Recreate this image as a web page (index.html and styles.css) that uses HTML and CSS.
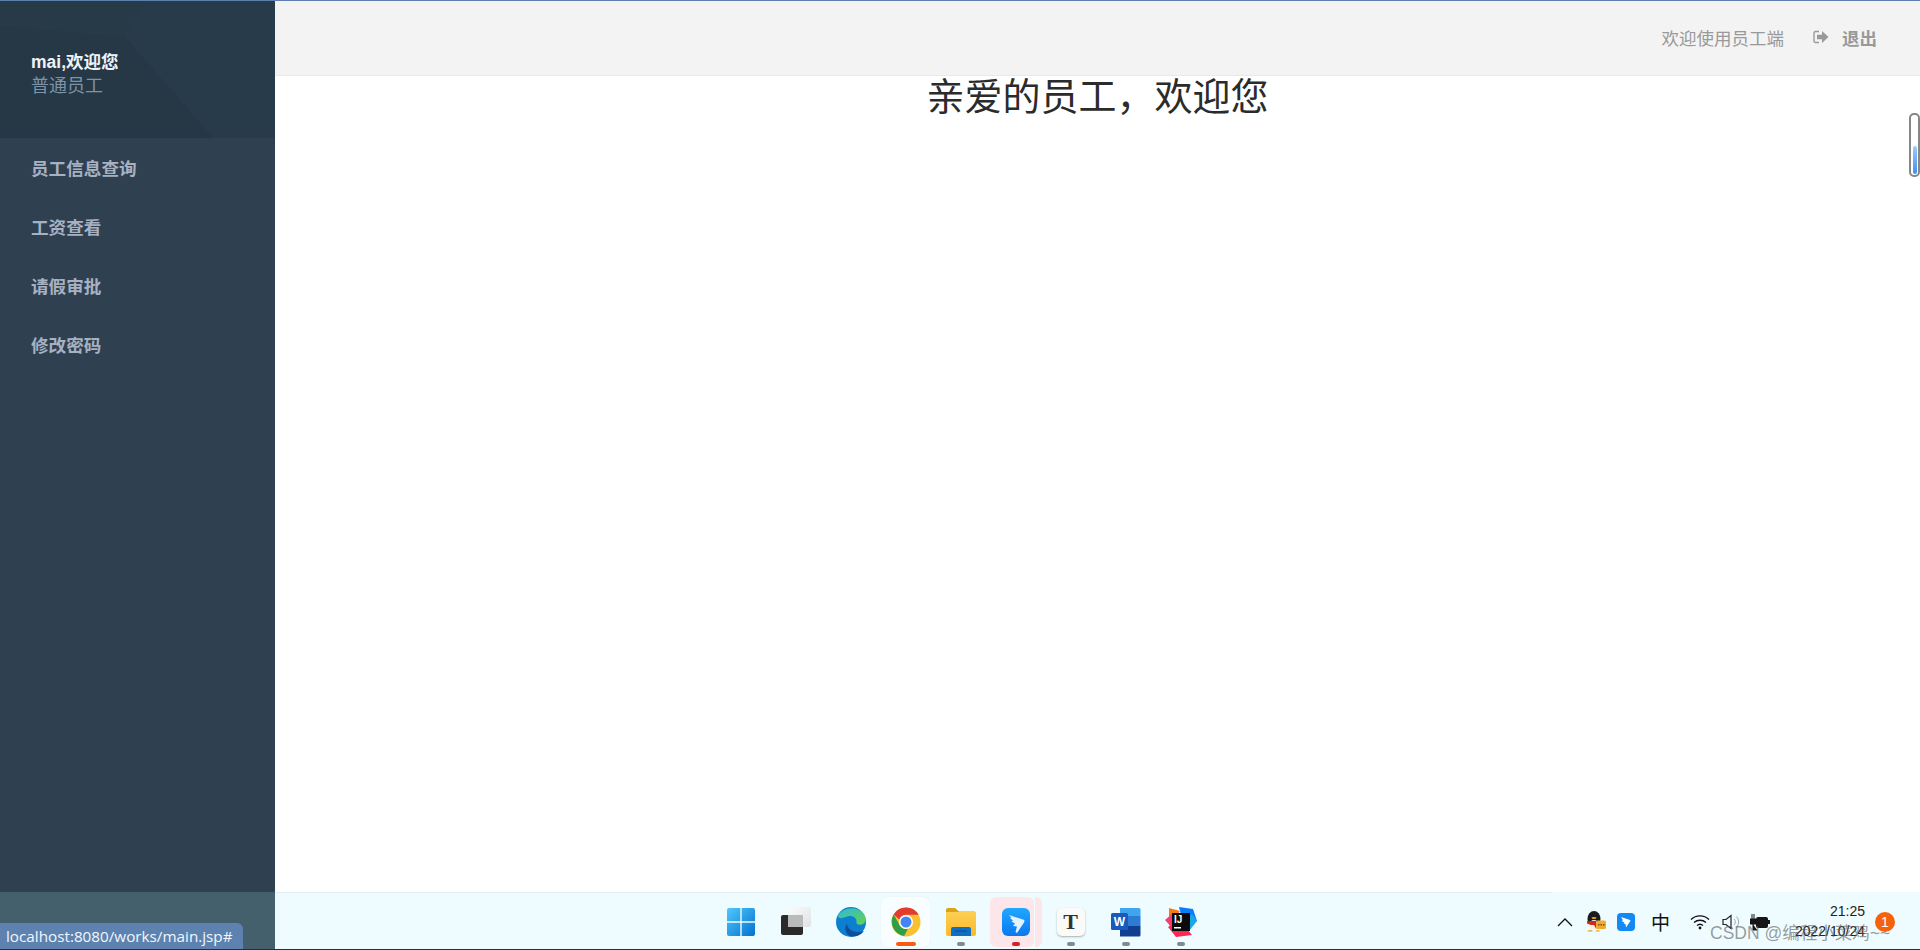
FILE: index.html
```html
<!DOCTYPE html>
<html lang="zh-CN">
<head>
<meta charset="utf-8">
<title>员工端</title>
<link rel="stylesheet" href="styles.css">
</head>
<body>
<div class="app">
  <div class="workspace">
    <aside class="sidebar">
      <div class="profile">
        <strong class="profile-name">mai,欢迎您</strong>
        <span class="profile-role">普通员工</span>
      </div>
      <nav class="nav">
        <a class="nav-item">员工信息查询</a>
        <a class="nav-item">工资查看</a>
        <a class="nav-item">请假审批</a>
        <a class="nav-item">修改密码</a>
      </nav>
    </aside>
    <main class="main">
      <header class="topbar">
        <span class="welcome">欢迎使用员工端</span>
        <a class="logout">
          <svg class="logout-icon" viewBox="0 0 16 14" width="16" height="14"><path d="M6 1.500H2.500A1.500 1.500 0 0 0 1 3v8a1.500 1.500 0 0 0 1.500 1.500H6" fill="none" stroke="#999" stroke-width="1.400"/><path d="M4 4.800h5V1l6.500 6L9 13V9.200H4z" fill="#999"/></svg>
          <b>退出</b>
        </a>
      </header>
      <h1 class="title">亲爱的员工，欢迎您</h1>
    </main>
  </div>
  <footer class="taskbar">
    <div class="taskbar-side"></div>
    <div class="taskbar-apps">
      <span class="app-icon"><svg viewBox="0 0 30 30" width="30" height="30"><defs><linearGradient id="w" x1="0" y1="0" x2="1" y2="1"><stop offset="0" stop-color="#4fc8fb"/><stop offset="1" stop-color="#0472cf"/></linearGradient></defs><path fill="url(#w)" d="M1 3a2 2 0 0 1 2-2h11.300v13.300H1zM15.700 1H27a2 2 0 0 1 2 2v11.300H15.700zM1 15.700h13.300V29H3a2 2 0 0 1-2-2zM15.700 15.700H29V27a2 2 0 0 1-2 2H15.700z"/></svg></span>
      <span class="app-icon"><svg viewBox="0 0 30 30" width="30" height="30"><defs><linearGradient id="tv" x1="0" y1="0" x2="1" y2="1"><stop offset="0" stop-color="#fbfbfb"/><stop offset="1" stop-color="#dfe3e3"/></linearGradient></defs><rect x="7" y="0" width="23" height="20" rx="2" fill="url(#tv)"/><rect x="0" y="8" width="22" height="20" rx="2" fill="#2a2a2a"/><rect x="7" y="8" width="15" height="12" fill="#b9bbbb"/></svg></span>
      <span class="app-icon"><svg viewBox="0 0 30 30" width="30" height="30"><defs><linearGradient id="e" x1="0" y1="0" x2="1" y2="1"><stop offset="0" stop-color="#2fb8d8"/><stop offset="1" stop-color="#62d44f"/></linearGradient></defs><circle cx="15" cy="15" r="15" fill="#0d7fd0"/><path d="M1.500 9C5 2 19-3 27 6c4 4.500 3.500 10-1 11.500-4 1-6-.5-5.500-2.500 .5-4-4-7-9-5.500C7 10.500 4 13 1.500 9z" fill="url(#e)"/><path d="M11 17c1 6 8 10 17 7-3 4-8 6-12.500 5.500C9 28 8 20 11 17z" fill="#0e4f9c"/></svg></span>
      <span class="app-icon app-chrome"><svg viewBox="0 0 30 30" width="30" height="30"><circle cx="15" cy="15" r="14.500" fill="#fbc02d"/><path d="M15 .5a14.500 14.500 0 0 1 12.600 7.300H15a7.200 7.200 0 0 0-6.700 4.600L2.600 7.400A14.500 14.500 0 0 1 15 .5z" fill="#e33b2e"/><path d="M2.600 7.400l6.200 10.800a7.200 7.200 0 0 0 8.300 3.400l-4 7.300A14.500 14.500 0 0 1 2.600 7.400z" fill="#2f9e48"/><circle cx="15" cy="15" r="7" fill="#fff"/><circle cx="15" cy="15" r="5.500" fill="#4285f4"/></svg><i class="pip pip-orange"></i></span>
      <span class="app-icon"><svg viewBox="0 0 30 28" width="30" height="28"><defs><linearGradient id="f" x1="0" y1="0" x2="0" y2="1"><stop offset="0" stop-color="#fbcf52"/><stop offset="1" stop-color="#fcb92c"/></linearGradient></defs><path d="M0 2a2 2 0 0 1 2-2h7l4 3.500h15a2 2 0 0 1 2 2V8H0z" fill="#dfa114"/><path d="M0 4h30v22a2 2 0 0 1-2 2H2a2 2 0 0 1-2-2z" fill="url(#f)"/><path d="M5 21a2 2 0 0 1 2-2h16a2 2 0 0 1 2 2v7H5z" fill="#0f6fc4"/><rect x="9" y="22.500" width="12" height="1" fill="#0a4f93"/></svg><i class="pip"></i></span>
      <span class="app-icon app-active"><svg class="app-glyph" viewBox="0 0 28 28" width="28" height="28"><defs><linearGradient id="d" x1="0" y1="0" x2="0" y2="1"><stop offset="0" stop-color="#20a8ff"/><stop offset="1" stop-color="#0a78f0"/></linearGradient></defs><rect width="28" height="28" rx="6" fill="url(#d)"/><path d="M7 7l14 4.500c2 .5 1.500 2 1 3L15 25l-1.500-1 1.500-5.500-4-.5 2-2.500-3.500-2 1.500-1-3-2.500 1.500-.2z" fill="#e4f2ff"/></svg><i class="pip pip-red"></i></span>
      <span class="app-icon"><span class="typora">T</span><i class="pip"></i></span>
      <span class="app-icon"><svg viewBox="0 0 30 30" width="30" height="30"><path d="M9 1h19a1.500 1.500 0 0 1 1.500 1.500V9H9z" fill="#41a5ee"/><path d="M9 9h20.500v10H9z" fill="#2b7cd3"/><path d="M9 19h20.500v9a1.500 1.500 0 0 1-1.500 1.500H9z" fill="#103f91"/><rect x="0" y="6" width="17" height="17" rx="1.500" fill="#185abd"/><text class="word-w" x="8.500" y="19">W</text></svg><i class="pip"></i></span>
      <span class="app-icon"><svg viewBox="0 0 32 30" width="32" height="30"><path d="M4 1l11 3L4 19z" fill="#f97a12"/><path d="M0 13l8-7v16z" fill="#fc3c6c"/><path d="M14 0l14 2 4 12-13 5z" fill="#087cfa"/><path d="M20 29l12-15-5-7-14 10z" fill="#16a8e8"/><path d="M3 20l8 10 16-2-12-15z" fill="#fe2857"/><rect x="7" y="6" width="18" height="18" fill="#0b0b0b"/><text class="ij" x="9" y="15.500">IJ</text><rect x="9" y="20" width="7" height="1.500" fill="#fff"/></svg><i class="pip"></i></span>
    </div>
    <div class="tray">
      <svg class="tray-chevron" viewBox="0 0 16 10" width="16" height="10"><path d="M1 9l7-7 7 7" fill="none" stroke="#111" stroke-width="1.300"/></svg>
      <svg viewBox="0 0 20 21" width="20" height="21"><ellipse cx="8" cy="8" rx="6.500" ry="8" fill="#1b1b1b"/><ellipse cx="8" cy="14" rx="5" ry="5" fill="#f4f0e6"/><ellipse cx="8" cy="7" rx="2.500" ry="1" fill="#f2a51b"/><path d="M1 10h14v2.500l-4 1-1 4-2-3.500-3 0-4-1.500z" fill="#d3261d"/><path d="M1 20.500c2-2 5-2 6 0zM9 20.500c2-2 4-2 5 0z" fill="#f2a51b"/><rect x="10" y="9.500" width="10" height="8.500" rx="1.500" fill="#f2ab2e"/><path d="M12 13h1.500v1.500H12zM14.500 13H16v1.500h-1.500zM17 13h1.500v1.500H17z" fill="#7a4a10"/></svg>
      <svg class="tray-ding" viewBox="0 0 18 18" width="18" height="18"><rect width="18" height="18" rx="4" fill="#1289f5"/><path d="M4 4l9 3c.8.4.4 1 0 1.500l-4 6-.5-3.500-2-.5 1-1-3-1.500 1.500-.7z" fill="#fff"/></svg>
      <span class="tray-ime">中</span>
      <svg class="tray-wifi" viewBox="0 0 20 16" width="20" height="16"><path d="M1 5.500a13 13 0 0 1 18 0M4 8.500a9 9 0 0 1 12 0M7 11.500a4.500 4.500 0 0 1 6 0" fill="none" stroke="#111" stroke-width="1.400"/><circle cx="10" cy="14" r="1.400" fill="#111"/></svg>
      <svg class="tray-sound" viewBox="0 0 20 16" width="20" height="16"><path d="M1 5.500h3l5-4v13l-5-4H1z" fill="none" stroke="#222" stroke-width="1.200"/><path d="M12 5a4 4 0 0 1 0 6M14.500 2.500a8 8 0 0 1 0 11" fill="none" stroke="#aaa" stroke-width="1"/></svg>
      <svg class="tray-power" viewBox="0 0 20 18" width="20" height="18"><rect x="6" y="4" width="12" height="11" rx="2" fill="#151515"/><path d="M0 6h6v5H0zM2 1v5M4 1v5M3 11v6h4" stroke="#151515" stroke-width="1" fill="#151515"/><rect x="18" y="7" width="2" height="4" fill="#151515"/></svg>
      <div class="clock"><span>21:25</span><span>2022/10/24</span></div>
      <span class="badge">1</span>
    </div>
    <div class="tray-edge"></div>
  </footer>
</div>
<div class="scroll-thumb"><span class="scroll-fill"></span></div>
<div class="status-link">localhost:8080/works/main.jsp#</div>
<div class="watermark">CSDN @编程小菜鸡~~</div>
</body>
</html>
```

FILE: styles.css
```css
* { box-sizing: border-box; }
html, body { margin: 0; height: 100%; overflow: hidden; }
body {
  font-family: "Liberation Sans", "Noto Sans CJK SC", sans-serif;
  font-size: 16px;
  background: #fff;
  color: #333;
}
.app {
  height: 950px;
  display: flex;
  flex-direction: column;
  border-top: 1px solid #5d7eae;
  border-bottom: 1px solid #262f33;
}
.workspace { flex: 1; display: flex; min-height: 0; }
.sidebar {
  width: 275px;
  flex: none;
  background: #2f4050;
  display: flex;
  flex-direction: column;
}
.profile {
  height: 137px;
  padding: 49px 0 0 31px;
  display: flex;
  flex-direction: column;
  position: relative;
  background: #263846;
}
.profile::before {
  content: "";
  position: absolute;
  inset: 0;
  background: #283b4a;
  clip-path: polygon(143px 0, 125px 36px, 213px 137px, 275px 137px, 275px 0);
}
.profile::after {
  content: "";
  position: absolute;
  inset: 0;
  background: #273a48;
  clip-path: polygon(0 0, 143px 0, 125px 36px, 0 25px);
}
.profile-name, .profile-role { position: relative; z-index: 1; }
.profile-name { color: #eef3f8; font-size: 17.500px; line-height: 24px; font-weight: 700; }
.profile-role { color: #7d93a8; font-size: 18px; line-height: 24px; }
.nav { display: flex; flex-direction: column; }
.nav-item {
  height: 59px;
  padding-left: 31px;
  display: flex;
  align-items: center;
  color: #a7b1c2;
  font-size: 17.600px;
  font-weight: 700;
}
.main { flex: 1; min-width: 0; display: flex; flex-direction: column; }
.topbar {
  height: 75px;
  flex: none;
  background: #f3f3f4;
  border-bottom: 1px solid #e7eaec;
  display: flex;
  align-items: center;
  justify-content: flex-end;
  padding: 0 43px 2px 0;
  gap: 29px;
  color: #999;
  font-size: 17.500px;
}
.logout { display: flex; align-items: center; gap: 13px; }
.logout b { font-weight: 700; }
.title {
  margin: 0;
  text-align: center;
  font-size: 38px;
  line-height: 42px;
  font-weight: 400;
  color: #2b2b2b;
}
.taskbar {
  height: 57px;
  flex: none;
  display: flex;
  position: relative;
  background: #effcff;
  border-top: 1px solid #dfeef1;
}
.taskbar-side { width: 275px; flex: none; background: #44606d; margin-top: -1px; }
.taskbar-apps {
  position: absolute;
  left: 713px;
  top: 0;
  display: flex;
  height: 100%;
}
.app-icon {
  width: 55px;
  height: 100%;
  display: flex;
  align-items: center;
  justify-content: center;
  position: relative;
  padding-top: 1px;
}
.app-icon > svg, .app-icon > .typora { position: relative; z-index: 1; }
.app-chrome::before {
  content: "";
  position: absolute;
  left: 3px;
  top: 4px;
  bottom: 2px;
  width: 49px;
  background: #f8fdff;
  border-radius: 6px;
  box-shadow: 0 0 1px rgba(0,0,0,.12);
}
.app-active::before {
  content: "";
  position: absolute;
  left: 2px;
  top: 4px;
  bottom: 2px;
  width: 44px;
  background: #fde6e9;
  border-radius: 6px;
}
.app-active::after {
  content: "";
  position: absolute;
  left: 47px;
  top: 4px;
  bottom: 2px;
  width: 7px;
  background: #fde6e9;
  border-radius: 0 6px 6px 0;
}
.pip {
  position: absolute;
  z-index: 1;
  left: 50%;
  bottom: 3px;
  width: 8px;
  height: 4px;
  margin-left: -4px;
  border-radius: 2px;
  background: #7f8b8f;
}
.pip-orange { width: 20px; margin-left: -10px; background: #fb5a12; }
.pip-red { background: #d32222; }
.typora {
  width: 28px;
  height: 28px;
  background: #fafaf8;
  border-radius: 5px;
  box-shadow: 0 1px 2px rgba(0,0,0,.3);
  font-family: "Liberation Serif", serif;
  font-weight: 700;
  font-size: 22px;
  line-height: 28px;
  text-align: center;
  color: #333;
}
.word-w { fill: #fff; font-family: "Liberation Sans", sans-serif; font-size: 12px; font-weight: 700; text-anchor: middle; }
.ij { fill: #fff; font-family: "Liberation Sans", sans-serif; font-size: 10px; font-weight: 700; }
.tray {
  position: absolute;
  left: 1557px;
  top: 0;
  right: 0;
  height: 100%;
  display: flex;
  align-items: center;
  color: #111;
  padding-top: 1px;
}
.tray-ding { margin-left: 11px; }
.tray-ime { margin-left: 16px; font-size: 19px; width: 22px; }
.tray-wifi { margin-left: 17px; }
.tray-sound { margin-left: 12px; }
.tray-power { margin-left: 8px; }
.tray-chevron { margin-right: 13px; }
.clock {
  position: absolute;
  left: 212px;
  top: 8px;
  width: 96px;
  display: flex;
  flex-direction: column;
  align-items: flex-end;
  font-size: 14px;
  line-height: 20px;
  color: #222;
}
.badge {
  position: absolute;
  left: 318px;
  top: 19px;
  width: 20px;
  height: 20px;
  border-radius: 50%;
  background: #f6620c;
  color: #fff;
  font-size: 14px;
  line-height: 20px;
  text-align: center;
}
.tray-edge { position: absolute; right: 0; top: -1px; width: 368px; height: 1px; background: #effcff; }
.scroll-thumb {
  position: absolute;
  left: 1909px;
  top: 113px;
  width: 11px;
  height: 64px;
  border: 2.500px solid #868686;
  border-radius: 5px;
  background: #fff;
  display: flex;
  align-items: flex-end;
  justify-content: center;
  padding-bottom: 1px;
}
.scroll-fill { width: 4px; height: 28px; border-radius: 2px; background: linear-gradient(#9bcdf7, #3f8ffb); }
.status-link {
  position: absolute;
  left: 0;
  top: 923px;
  width: 243px;
  height: 26px;
  padding-left: 6px;
  background: #5d82b0;
  border-top-right-radius: 6px;
  color: #f2f6fb;
  font-family: "Open Sans", "Liberation Sans", sans-serif;
  font-size: 15.250px;
  line-height: 26px;
  white-space: nowrap;
}
.watermark {
  position: absolute;
  left: 1710px;
  top: 921px;
  color: rgba(90,90,90,.6);
  font-size: 17.500px;
  line-height: 24px;
  white-space: nowrap;
}
```
